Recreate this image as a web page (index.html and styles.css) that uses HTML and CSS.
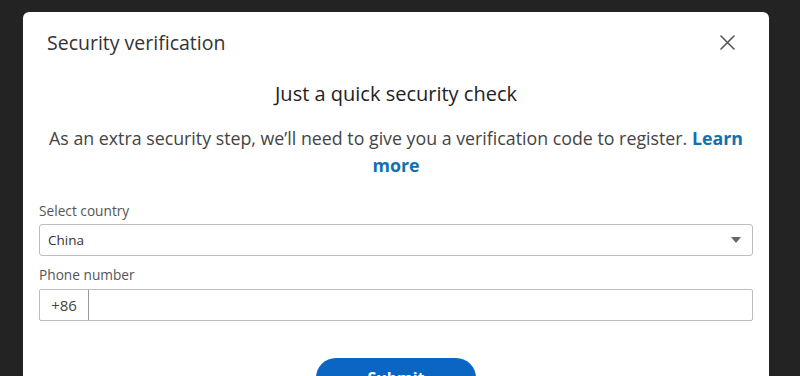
FILE: index.html
```html
<!DOCTYPE html>
<html lang="en">
<head>
<meta charset="utf-8">
<title>Security verification</title>
<link rel="stylesheet" href="styles.css">
</head>
<body>
<div class="modal">
  <div class="modal-header">
    <h2 class="modal-title">Security verification</h2>
    <button class="close" aria-label="Close">
      <svg width="15" height="15" viewBox="0 0 15 15"><path d="M1 1 L14 14 M14 1 L1 14" stroke="#555" stroke-width="1.6" fill="none" stroke-linecap="round"/></svg>
    </button>
  </div>
  <div class="modal-body">
    <h3 class="heading">Just a quick security check</h3>
    <p class="desc">As an extra security step, we’ll need to give you a verification code to register. <a href="#" class="link">Learn more</a></p>
    <label class="label">Select country</label>
    <div class="select">
      <span class="select-value">China</span>
      <span class="caret"></span>
    </div>
    <label class="label label-phone">Phone number</label>
    <div class="phone">
      <span class="prefix">+86</span>
      <span class="phone-input"></span>
    </div>
    <div class="actions">
      <button class="submit">Submit</button>
    </div>
  </div>
</div>
</body>
</html>
```
FILE: styles.css
```css
html, body {
  margin: 0;
  padding: 0;
  height: 100%;
}
body {
  background: #232323;
  font-family: "Open Sans", "Noto Sans", sans-serif;
  overflow: hidden;
}
.modal {
  margin: 12px 0 0 23px;
  width: 746px;
  height: 400px;
  background: #fff;
  border-radius: 6px;
  display: flex;
  flex-direction: column;
}
.modal-header {
  height: 60px;
  display: flex;
  align-items: center;
  justify-content: space-between;
  padding: 0 34px 0 24px;
}
.modal-title {
  margin: 0;
  font-size: 19.5px;
  font-weight: 400;
  color: #333;
}
.close {
  border: 0;
  background: none;
  padding: 0;
  width: 15px;
  height: 15px;
  display: flex;
}
.modal-body {
  padding: 0 16px;
  display: flex;
  flex-direction: column;
}
.heading {
  margin: 8px 0 0;
  text-align: center;
  font-size: 20px;
  line-height: 28px;
  font-weight: 400;
  color: #222;
}
.desc {
  margin: 17px 0 0;
  text-align: center;
  font-size: 17.8px;
  line-height: 27px;
  color: #444;
}
.link {
  color: #1270b0;
  font-weight: 700;
  text-decoration: none;
}
.label {
  margin-top: 22px;
  font-size: 13.7px;
  line-height: 20px;
  color: #555;
}
.label-phone {
  margin-top: 9px;
}
.select {
  margin-top: 3px;
  height: 30px;
  border: 1px solid #bdbdbd;
  border-radius: 3px;
  display: flex;
  align-items: center;
  justify-content: space-between;
  padding: 0 11px 0 8px;
}
.select-value {
  font-size: 13.5px;
  color: #333;
}
.caret {
  width: 0;
  height: 0;
  border-left: 5px solid transparent;
  border-right: 5px solid transparent;
  border-top: 6px solid #666;
}
.phone {
  margin-top: 4px;
  height: 30px;
  border: 1px solid #bdbdbd;
  border-radius: 2px;
  display: flex;
}
.prefix {
  width: 48px;
  border-right: 1px solid #999;
  display: flex;
  align-items: center;
  justify-content: center;
  font-size: 15px;
  color: #444;
}
.phone-input {
  flex: 1;
}
.actions {
  margin-top: 37px;
  display: flex;
  justify-content: center;
}
.submit {
  width: 160px;
  height: 40px;
  border: 0;
  border-radius: 20px;
  background: #0a66c2;
  color: #fff;
  font-family: inherit;
  font-size: 16px;
  font-weight: 700;
}
```
